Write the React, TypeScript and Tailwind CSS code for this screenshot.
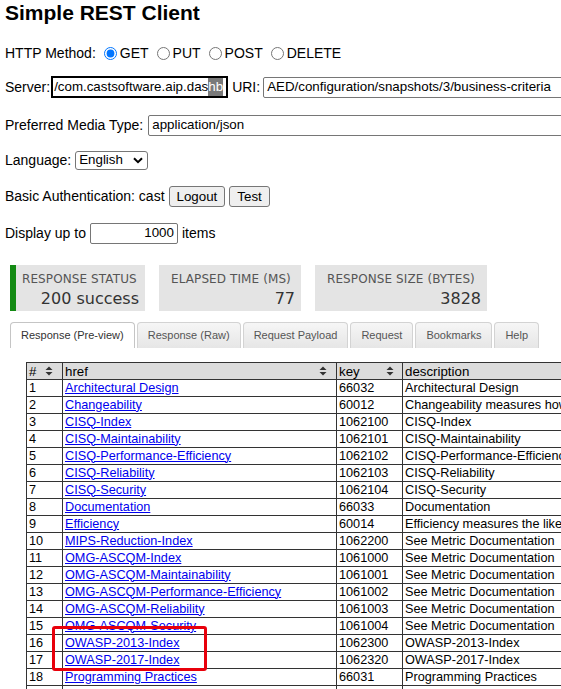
import React from 'react';

const rows: [string, string, string][] = [
  ['Architectural Design', '66032', 'Architectural Design'],
  ['Changeability', '60012', 'Changeability measures how flexible and adaptable the application is'],
  ['CISQ-Index', '1062100', 'CISQ-Index'],
  ['CISQ-Maintainability', '1062101', 'CISQ-Maintainability'],
  ['CISQ-Performance-Efficiency', '1062102', 'CISQ-Performance-Efficiency'],
  ['CISQ-Reliability', '1062103', 'CISQ-Reliability'],
  ['CISQ-Security', '1062104', 'CISQ-Security'],
  ['Documentation', '66033', 'Documentation'],
  ['Efficiency', '60014', 'Efficiency measures the likelihood of potential performance issues'],
  ['MIPS-Reduction-Index', '1062200', 'See Metric Documentation'],
  ['OMG-ASCQM-Index', '1061000', 'See Metric Documentation'],
  ['OMG-ASCQM-Maintainability', '1061001', 'See Metric Documentation'],
  ['OMG-ASCQM-Performance-Efficiency', '1061002', 'See Metric Documentation'],
  ['OMG-ASCQM-Reliability', '1061003', 'See Metric Documentation'],
  ['OMG-ASCQM-Security', '1061004', 'See Metric Documentation'],
  ['OWASP-2013-Index', '1062300', 'OWASP-2013-Index'],
  ['OWASP-2017-Index', '1062320', 'OWASP-2017-Index'],
  ['Programming Practices', '66031', 'Programming Practices'],
  ['Robustness', '60013', 'Robustness measures the level of risk and the likelihood'],
  ['Security', '60016', 'Security measures the likelihood of potential security breaches'],
];

const tabs = ['Response (Pre-view)', 'Response (Raw)', 'Request Payload', 'Request', 'Bookmarks', 'Help'];

function SortIcon() {
  return (
    <svg width="8" height="10" viewBox="0 0 8 10" className="shrink-0">
      <path d="M4 0.5 L7.5 4 L0.5 4 Z" fill="#333" />
      <path d="M4 9.5 L7.5 6 L0.5 6 Z" fill="#333" />
    </svg>
  );
}

function Radio({ label, checked }: { label: string; checked?: boolean }) {
  return (
    <label className="flex items-center gap-[3px] mr-[5px]">
      <input type="radio" name="method" defaultChecked={checked} className="m-0 ml-[3px] w-[13px] h-[13px]" />
      <span>{label}</span>
    </label>
  );
}

function StatBox({ label, value, width, accent }: { label: string; value: string; width: string; accent?: boolean }) {
  return (
    <div className={`${width} h-[46px] bg-[#e4e4e4] flex flex-col items-stretch pt-[7px] pr-[6px] ${accent ? 'border-l-[6px] border-[#138a13] pl-[6px]' : 'pl-[12px]'}`}>
      <div className="text-[12px] leading-[15px] text-[#555] tracking-[0.1px]">{label}</div>
      <div className="mt-[2px] text-[16px] leading-[20px] text-[#333] text-right">{value}</div>
    </div>
  );
}

export default function App() {
  return (
    <div className="w-[561px] h-[689px] overflow-hidden bg-white text-[14px] text-black font-['Liberation_Sans',Arial,sans-serif]">
      <div className="px-[5px]">
        <h1 className="text-[21px] leading-[24px] font-bold pt-[1px]">Simple REST Client</h1>

        <div className="h-[24px] mt-[16px] flex items-center whitespace-nowrap">
          <span className="mr-[5px]">HTTP Method:</span>
          <Radio label="GET" checked />
          <Radio label="PUT" />
          <Radio label="POST" />
          <Radio label="DELETE" />
        </div>

        <div className="h-[24px] mt-[10px] flex items-center whitespace-nowrap">
          <span className="shrink-0">Server:</span>
          <div className="shrink-0 ml-[1px] w-[177px] h-[22px] border-2 border-black flex items-center overflow-hidden px-[1px] text-[13.33px]">
            <span>/com.castsoftware.aip.das</span>
            <span className="bg-[#7a7a7a] text-white">hb</span>
          </div>
          <span className="shrink-0 ml-[4px]">URI:</span>
          <div className="ml-[3px] w-[320px] shrink-0 h-[21px] border border-[#767676] rounded-[2px] flex items-center px-[3px] text-[13.33px]">
            AED/configuration/snapshots/3/business-criteria
          </div>
        </div>

        <div className="h-[24px] mt-[14px] flex items-center whitespace-nowrap">
          <span className="shrink-0">Preferred Media Type:</span>
          <div className="ml-[5px] w-[420px] shrink-0 h-[21px] border border-[#767676] rounded-[2px] flex items-center px-[3px] text-[13.33px]">
            application/json
          </div>
        </div>

        <div className="h-[24px] mt-[11px] flex items-center whitespace-nowrap">
          <span>Language:</span>
          <div className="ml-[4px] w-[73px] h-[19px] border border-[#767676] rounded-[3px] flex items-center justify-between pl-[3px] pr-[4px] text-[13.33px]">
            <span>English</span>
            <svg width="10" height="7" viewBox="0 0 10 7">
              <path d="M1 1.2 L5 5.2 L9 1.2" fill="none" stroke="#000" strokeWidth="2" />
            </svg>
          </div>
        </div>

        <div className="h-[24px] mt-[12px] flex items-center whitespace-nowrap">
          <span>Basic Authentication: cast</span>
          <button className="ml-[4px] h-[21px] px-[7px] bg-[#efefef] border border-[#767676] rounded-[3px] text-[13.33px]">Logout</button>
          <button className="ml-[4px] h-[21px] px-[7px] bg-[#efefef] border border-[#767676] rounded-[3px] text-[13.33px]">Test</button>
        </div>

        <div className="h-[24px] mt-[13px] flex items-center whitespace-nowrap">
          <span>Display up to</span>
          <div className="ml-[4px] w-[88px] h-[21px] border border-[#767676] rounded-[2px] flex items-center justify-end px-[3px] text-[13.33px]">
            1000
          </div>
          <span className="ml-[4px]">items</span>
        </div>

        <div className="mt-[20px] ml-[5px] flex gap-[14px] font-['DejaVu_Sans',Verdana,sans-serif]">
          <StatBox label="RESPONSE STATUS" value="200 success" width="w-[135px]" accent />
          <StatBox label="ELAPSED TIME (MS)" value="77" width="w-[142px]" />
          <StatBox label="RESPONSE SIZE (BYTES)" value="3828" width="w-[172px]" />
        </div>

        <div className="mt-[11px] ml-[5px] flex gap-[2px] text-[11px] whitespace-nowrap">
          {tabs.map((t, i) => (
            <div
              key={t}
              className={`h-[26px] px-[10px] flex items-center rounded-t-[4px] border border-b-0 ${
                i === 0 ? 'bg-white border-[#c5c5c5] text-[#333]' : 'bg-gradient-to-b from-[#f6f6f6] to-[#e6e6e6] border-[#d3d3d3] text-[#555]'
              }`}
            >
              {t}
            </div>
          ))}
        </div>

        <div className="relative mt-[14px] ml-[21px]">
          <table className="table-fixed border-collapse w-[636px] text-[12.7px] leading-[15px]">
            <colgroup>
              <col className="w-[36px]" />
              <col className="w-[274px]" />
              <col className="w-[66px]" />
              <col className="w-[260px]" />
            </colgroup>
            <thead>
              <tr className="bg-[#dcdcdc] h-[17px] text-[13.3px]">
                <th className="border border-[#333] px-[2px] py-0 font-normal text-left">
                  <div className="flex items-center justify-between pr-[7px]"><span>#</span><SortIcon /></div>
                </th>
                <th className="border border-[#333] px-[2px] py-0 font-normal text-left">
                  <div className="flex items-center justify-between pr-[7px]"><span>href</span><SortIcon /></div>
                </th>
                <th className="border border-[#333] px-[2px] py-0 font-normal text-left">
                  <div className="flex items-center justify-between pr-[6px]"><span>key</span><SortIcon /></div>
                </th>
                <th className="border border-[#333] px-[2px] py-0 font-normal text-left">description</th>
              </tr>
            </thead>
            <tbody>
              {rows.map(([href, key, desc], i) => (
                <tr key={href} className="h-[17px]">
                  <td className="border border-[#333] px-[2px] py-0 whitespace-nowrap">{i + 1}</td>
                  <td className="border border-[#333] px-[2px] py-0 whitespace-nowrap overflow-hidden">
                    <a href="#" className="text-[#0000ee] underline">{href}</a>
                  </td>
                  <td className="border border-[#333] px-[2px] py-0 whitespace-nowrap">{key}</td>
                  <td className="border border-[#333] px-[2px] py-0 whitespace-nowrap overflow-hidden">{desc}</td>
                </tr>
              ))}
            </tbody>
          </table>
          <div className="absolute left-[26px] top-[264px] w-[155px] h-[45px] border-[3px] border-[#e8000b] rounded-[3px] pointer-events-none" />
        </div>
      </div>
    </div>
  );
}
